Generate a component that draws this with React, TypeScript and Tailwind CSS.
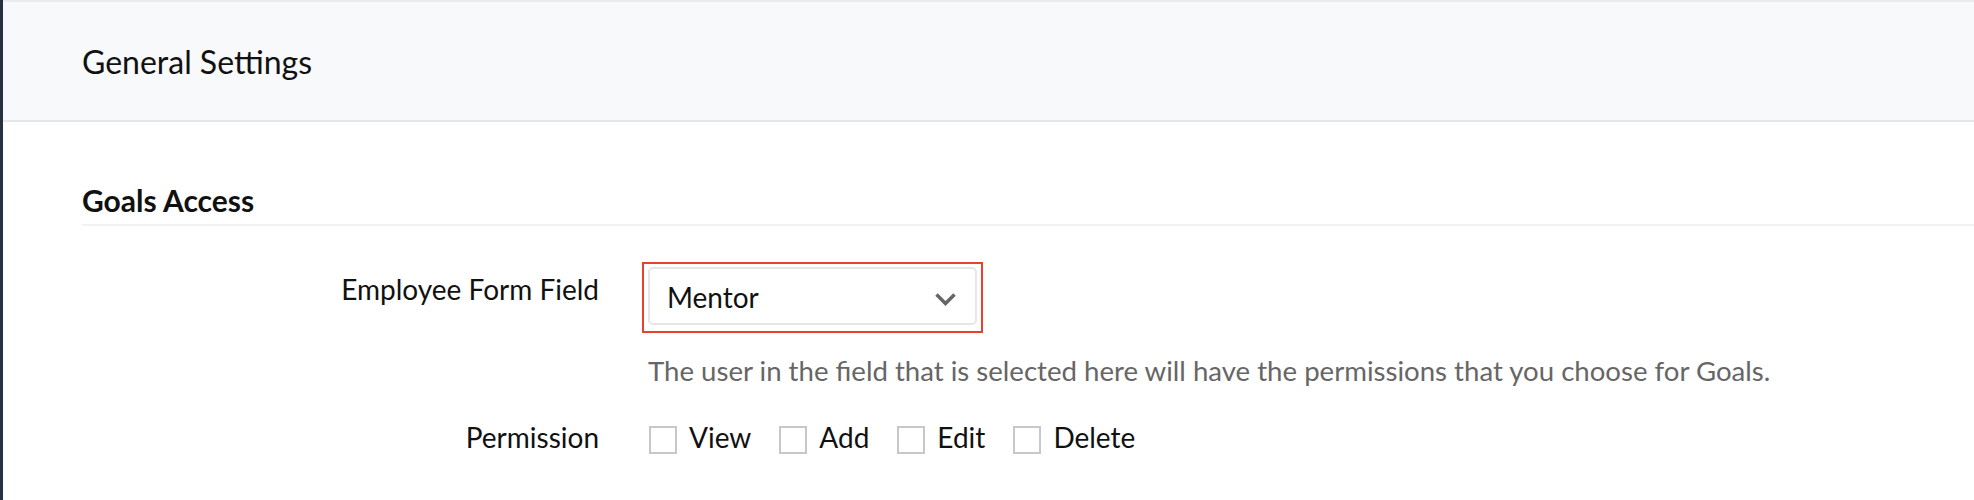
import React from "react";

function Checkbox({ label }: { label: string }) {
  return (
    <label className="flex items-center gap-[12px]">
      <span className="mt-[6px] block h-[28px] w-[28px] border-2 border-[#c8c8c8] bg-white" />
      <span>{label}</span>
    </label>
  );
}

export default function App() {
  return (
    <div className="min-h-[500px] border-l-[3px] border-[#27313f] bg-white font-['Lato','Noto_Sans',sans-serif] text-[#111]">
      <div className="flex h-[122px] items-center border-t-2 border-b-2 border-t-[#e9ebee] border-b-[#e6e7e9] bg-[#f8f9fb] pl-[79px]">
        <h1 className="mt-[1px] text-[32px] leading-[38px] font-normal">General Settings</h1>
      </div>

      <div className="pl-[79px]">
        <h2 className="mt-[60px] border-b-2 border-[#f2f2f2] pb-[6px] text-[30px] leading-[36px] font-bold">
          Goals Access
        </h2>

        <div className="mt-[36px] flex text-[28px] leading-[34px]">
          <div className="w-[517px] pt-[10px] text-right">Employee Form Field</div>
          <div className="ml-[49px]">
            <div className="ml-[-6px] w-[341px] border-2 border-[#e8412c] px-[4px] pt-[3px] pb-[6px]">
              <div className="flex h-[58px] items-center justify-between rounded-[5px] border-2 border-[#e6e6e6] bg-white pl-[17px] pr-[18px]">
                <span className="mt-[2px]">Mentor</span>
                <svg width="23" height="14" viewBox="0 0 23 14" className="mt-[6px]">
                  <path d="M2.5 2.5 L11.5 11.5 L20.5 2.5" fill="none" stroke="#666" strokeWidth="3.5" />
                </svg>
              </div>
            </div>
            <p className="mt-[21px] text-[27.6px] text-[#666]">
              The user in the field that is selected here will have the permissions that you choose for Goals.
            </p>
          </div>
        </div>

        <div className="mt-[32px] flex text-[28px] leading-[34px]">
          <div className="w-[517px] text-right">Permission</div>
          <div className="ml-[50px] flex items-center gap-[28px]">
            <Checkbox label="View" />
            <Checkbox label="Add" />
            <Checkbox label="Edit" />
            <Checkbox label="Delete" />
          </div>
        </div>
      </div>
    </div>
  );
}
